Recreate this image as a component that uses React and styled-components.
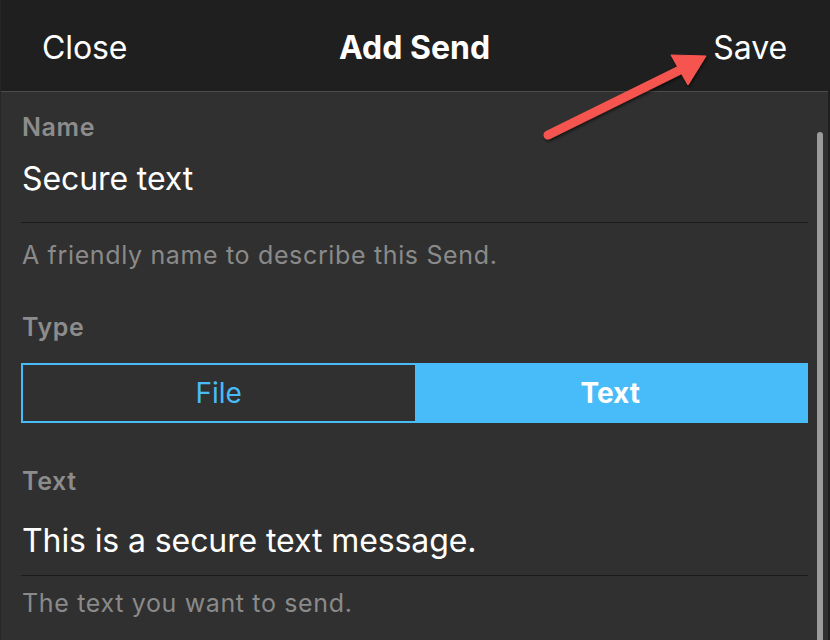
import React from "react";
import styled, { createGlobalStyle } from "styled-components";

const Global = createGlobalStyle`
  html, body { margin: 0; padding: 0; background: #303030; }
  body { font-family: Inter, "Noto Sans", "Liberation Sans", sans-serif; -webkit-font-smoothing: antialiased; }
  * { box-sizing: border-box; }
`;

const Screen = styled.div`
  position: relative;
  width: 830px;
  height: 640px;
  overflow: hidden;
  display: flex;
  flex-direction: column;
  background: #303030;
  border-left: 1px solid #262626;
  border-right: 2px solid #1f1f1f;
`;

const NavBar = styled.header`
  flex: 0 0 auto;
  height: 92px;
  padding: 4px 41px 0 41px;
  display: grid;
  grid-template-columns: 1fr auto 1fr;
  align-items: center;
  background: #1f1f1f;
  border-bottom: 1px solid #4c4c4c;
  color: #ffffff;
  font-size: 32px;
  line-height: 40px;
`;

const NavButton = styled.span`
  justify-self: ${(p) => (p.$end ? "end" : "start")};
  font-weight: 400;
  letter-spacing: -0.1px;
`;

const Title = styled.span`
  font-weight: 700;
  letter-spacing: 0px;
`;

const Content = styled.main`
  flex: 1 1 auto;
  padding: 0 20px 0 20px;
`;

const Section = styled.section`
  display: flex;
  flex-direction: column;
  margin-top: ${(p) => p.$top}px;
`;

const Label = styled.div`
  font-size: 25px;
  line-height: 30px;
  font-weight: 600;
  letter-spacing: 0.6px;
  color: #8c8c8c;
  padding-left: 1px;
`;

const InputValue = styled.div`
  font-size: 32px;
  line-height: 40px;
  color: #ffffff;
  padding: ${(p) => p.$pt}px 0 ${(p) => p.$pb}px 1px;
  border-bottom: 1px solid #1b1b1b;
  letter-spacing: -0.1px;
`;

const Hint = styled.div`
  font-size: 25px;
  line-height: 30px;
  letter-spacing: 0.65px;
  color: #8a8a8a;
  margin-top: ${(p) => p.$top}px;
  padding-left: 1px;
`;

const Segmented = styled.div`
  margin-top: 21px;
  height: 60px;
  display: grid;
  grid-template-columns: 1fr 1fr;
  border: 2px solid #48bcf8;
`;

const Segment = styled.div`
  display: flex;
  align-items: center;
  justify-content: center;
  font-size: 28px;
  font-weight: ${(p) => (p.$active ? 700 : 400)};
  color: ${(p) => (p.$active ? "#ffffff" : "#48bcf8")};
  background: ${(p) => (p.$active ? "#48bcf8" : "transparent")};
`;

const Scrollbar = styled.div`
  position: absolute;
  left: 816px;
  top: 132px;
  width: 6px;
  height: 520px;
  border-radius: 3px;
  background: #9b9b9b;
`;

const Overlay = styled.svg`
  position: absolute;
  left: -1px;
  top: 0;
  width: 830px;
  height: 640px;
  pointer-events: none;
`;

function Arrow() {
  return (
    <Overlay viewBox="0 0 830 640">
      <defs>
        <filter id="sh" x="-20%" y="-20%" width="140%" height="140%">
          <feDropShadow dx="1" dy="2" stdDeviation="1.5" floodColor="#000" floodOpacity="0.55" />
        </filter>
      </defs>
      <g filter="url(#sh)" fill="#f6554f" stroke="#f6554f">
        <line x1="548" y1="135" x2="684" y2="68" strokeWidth="9" strokeLinecap="round" />
        <polygon points="706,56 671,55 688,85" strokeWidth="1" strokeLinejoin="round" />
      </g>
    </Overlay>
  );
}

export default function App() {
  return (
    <>
      <Global />
      <Screen>
        <NavBar>
          <NavButton>Close</NavButton>
          <Title>Add Send</Title>
          <NavButton $end>Save</NavButton>
        </NavBar>
        <Content>
          <Section $top={20}>
            <Label>Name</Label>
            <InputValue $pt={17} $pb={23}>Secure text</InputValue>
            <Hint $top={17}>A friendly name to describe this Send.</Hint>
          </Section>
          <Section $top={42}>
            <Label>Type</Label>
            <Segmented>
              <Segment>File</Segment>
              <Segment $active>Text</Segment>
            </Segmented>
          </Section>
          <Section $top={43}>
            <Label>Text</Label>
            <InputValue $pt={25} $pb={14}>This is a secure text message.</InputValue>
            <Hint $top={12}>The text you want to send.</Hint>
          </Section>
        </Content>
        <Scrollbar />
        <Arrow />
      </Screen>
    </>
  );
}
